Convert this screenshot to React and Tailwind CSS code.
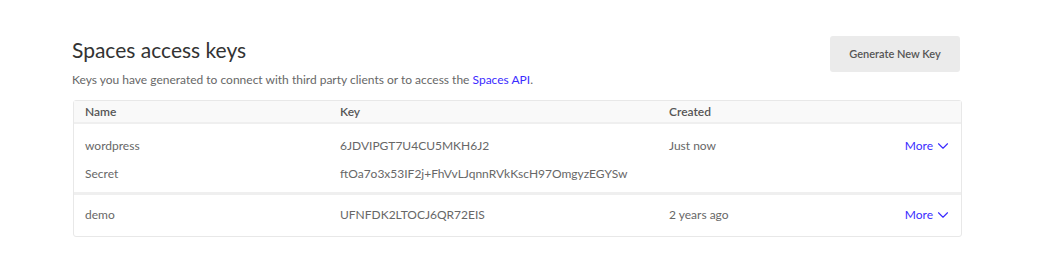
import { ChevronDown } from "lucide-react";

const keys = [
  { name: "wordpress", key: "6JDVIPGT7U4CU5MKH6J2", created: "Just now", secret: "ftOa7o3x53IF2j+FhVvLJqnnRVkKscH97OmgyzEGYSw" },
  { name: "demo", key: "UFNFDK2LTOCJ6QR72EIS", created: "2 years ago" },
];

function MoreLink() {
  return (
    <a href="#" className="flex items-center gap-[1px] text-[12px] text-[#3b2bff]">
      More
      <ChevronDown size={18} strokeWidth={1.5} className="mt-[-1px]" />
    </a>
  );
}

export default function App() {
  return (
    <div className="min-h-screen bg-white font-['Lato','Open_Sans',sans-serif] text-[#676767]">
      <div className="ml-[72px] w-[890px] pt-[36px]">
        <div className="flex items-start justify-between">
          <div>
            <h1 className="mt-0 text-[21px] leading-[28px] text-[#333]">Spaces access keys</h1>
            <p className="mt-[7px] text-[12px] leading-[18px] text-[#676767]">
              Keys you have generated to connect with third party clients or to access the{" "}
              <a href="#" className="text-[#3b2bff]">Spaces API</a>.
            </p>
          </div>
          <button className="mr-[2px] h-[36px] w-[130px] rounded-[3px] bg-[#ebebeb] text-[11px] font-semibold text-[#555]">
            Generate New Key
          </button>
        </div>

        <div className="ml-[1px] mt-[11px] rounded-[3px] border border-[#e8e8e8] text-[12px]">
          <div className="grid h-[23px] grid-cols-[255px_329px_1fr] items-center border-b-2 border-[#efefef] bg-[#f9f9f9] pl-[11px] pt-[1px] font-semibold text-[#555]">
            <span>Name</span>
            <span>Key</span>
            <span>Created</span>
          </div>
          {keys.map((k, i) => (
            <div
              key={k.name}
              className={`grid grid-cols-[255px_329px_1fr] pl-[11px] pr-[9px] ${i === 0 ? "border-b-[3px] border-[#efefef] pb-[9px] pt-[13px]" : "pb-[12px] pt-[11px]"}`}
            >
              <span className="leading-[18px]">{k.name}</span>
              <span className="leading-[18px]">{k.key}</span>
              <div className="flex h-[18px] items-center justify-between leading-[18px]">
                <span>{k.created}</span>
                <MoreLink />
              </div>
              {k.secret && (
                <>
                  <span className="mt-[10px] leading-[18px]">Secret</span>
                  <span className="col-span-2 mt-[10px] leading-[18px]">{k.secret}</span>
                </>
              )}
            </div>
          ))}
        </div>
      </div>
    </div>
  );
}
